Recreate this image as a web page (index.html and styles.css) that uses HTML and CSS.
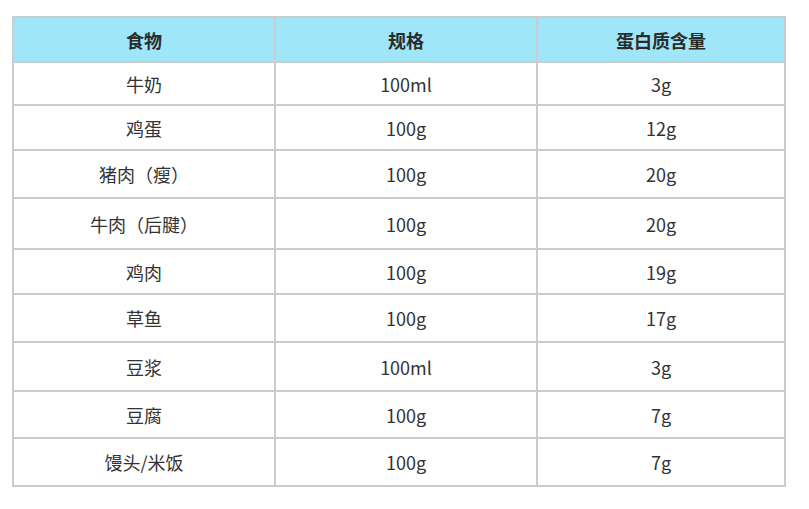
FILE: index.html
```html
<!DOCTYPE html>
<html lang="zh">
<head>
<meta charset="utf-8">
<link rel="stylesheet" href="styles.css">
</head>
<body>
<table class="protein">
  <colgroup>
    <col class="c1"><col class="c2"><col class="c3">
  </colgroup>
  <thead>
    <tr><th>食物</th><th>规格</th><th>蛋白质含量</th></tr>
  </thead>
  <tbody>
    <tr><td>牛奶</td><td>100ml</td><td>3g</td></tr>
    <tr><td>鸡蛋</td><td>100g</td><td>12g</td></tr>
    <tr><td>猪肉（瘦）</td><td>100g</td><td>20g</td></tr>
    <tr><td>牛肉（后腱）</td><td>100g</td><td>20g</td></tr>
    <tr><td>鸡肉</td><td>100g</td><td>19g</td></tr>
    <tr><td>草鱼</td><td>100g</td><td>17g</td></tr>
    <tr><td>豆浆</td><td>100ml</td><td>3g</td></tr>
    <tr><td>豆腐</td><td>100g</td><td>7g</td></tr>
    <tr><td>馒头/米饭</td><td>100g</td><td>7g</td></tr>
  </tbody>
</table>
</body>
</html>
```
FILE: styles.css
```css
html, body {
  margin: 0;
  padding: 0;
  background: #ffffff;
}
body {
  padding: 16px 0 0 12px;
  font-family: "Noto Sans CJK SC", "Noto Sans", sans-serif;
  color: #333333;
}
.protein {
  border-collapse: collapse;
  width: 772px;
  table-layout: fixed;
  font-size: 18px;
}
.c1 { width: 262px; }
.c2 { width: 262px; }
.c3 { width: 248px; }
.protein th,
.protein td {
  border: 2px solid #cccccc;
  text-align: center;
  padding: 0;
  line-height: 24px;
}
.protein th {
  background: #9fe6f8;
  font-weight: 700;
  height: 43px;
  color: #2b2b2b;
}
.protein td {
  height: 43px;
  font-weight: 400;
}
.protein tbody tr:nth-child(1) td { height: 41px; }
.protein tbody tr:nth-child(3) td { height: 46px; }
.protein tbody tr:nth-child(4) td { height: 49px; }
.protein tbody tr:nth-child(5) td { height: 43px; }
.protein tbody tr:nth-child(6) td { height: 46px; }
.protein tbody tr:nth-child(7) td { height: 47px; }
.protein tbody tr:nth-child(8) td { height: 45px; }
.protein tbody tr:nth-child(9) td { height: 46px; }
```
